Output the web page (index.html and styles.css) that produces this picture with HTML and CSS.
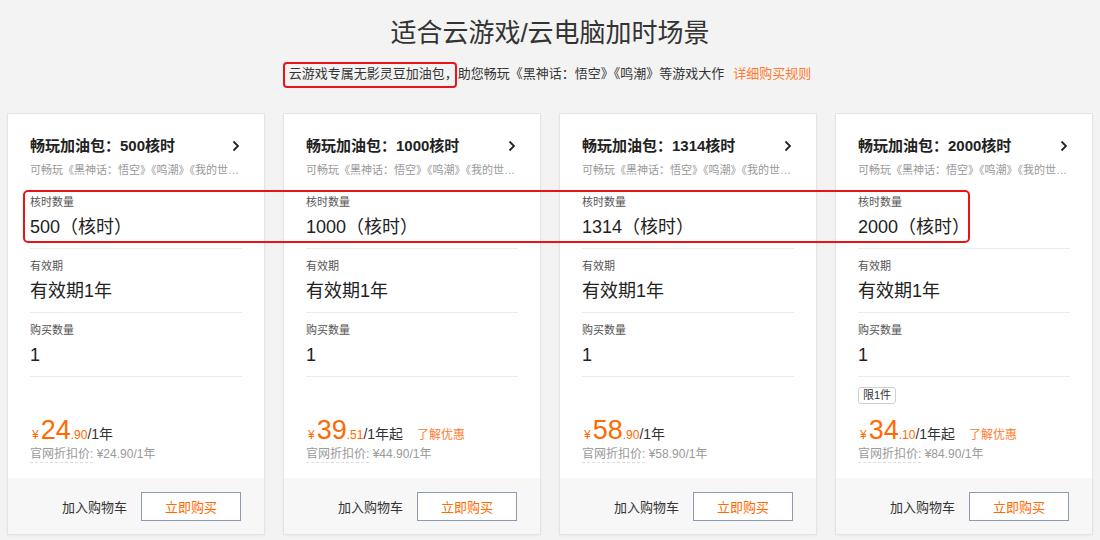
FILE: index.html
```html
<!DOCTYPE html>
<html lang="zh-CN">
<head>
<meta charset="utf-8">
<title>适合云游戏/云电脑加时场景</title>
<link rel="stylesheet" href="styles.css">
</head>
<body>
<div class="page">
  <header class="hero">
    <h1 class="hero-title">适合云游戏/云电脑加时场景</h1>
    <p class="hero-sub">云游戏专属无影灵豆加油包，助您畅玩《黑神话：悟空》《鸣潮》等游戏大作<a class="hero-link" href="#">详细购买规则</a></p>
  </header>

  <div class="cards">
    <section class="card">
      <div class="card-body">
        <div class="card-head">
          <div class="card-title-row"><h2 class="card-title">畅玩加油包：500核时</h2><svg class="chev" width="8" height="12" viewBox="0 0 8 12"><path d="M1.5 1.5 6 6l-4.5 4.5" fill="none" stroke="#222" stroke-width="1.8"/></svg></div>
          <p class="card-desc">可畅玩《黑神话：悟空》《鸣潮》《我的世…</p>
        </div>
        <div class="spec"><div class="spec-label">核时数量</div><div class="spec-value">500（核时）</div></div>
        <div class="spec"><div class="spec-label">有效期</div><div class="spec-value">有效期1年</div></div>
        <div class="spec"><div class="spec-label">购买数量</div><div class="spec-value">1</div></div>
        <div class="price-area">
          <div class="tag-row"></div>
          <div class="price-line"><span class="yen">¥</span><span class="int">24</span><span class="dec">.90</span><span class="unit">/1年</span></div>
          <div class="orig"><span class="orig-label">官网折扣价:</span> ¥24.90/1年</div>
        </div>
      </div>
      <div class="card-foot"><span class="cart">加入购物车</span><button class="buy">立即购买</button></div>
    </section>

    <section class="card">
      <div class="card-body">
        <div class="card-head">
          <div class="card-title-row"><h2 class="card-title">畅玩加油包：1000核时</h2><svg class="chev" width="8" height="12" viewBox="0 0 8 12"><path d="M1.5 1.5 6 6l-4.5 4.5" fill="none" stroke="#222" stroke-width="1.8"/></svg></div>
          <p class="card-desc">可畅玩《黑神话：悟空》《鸣潮》《我的世…</p>
        </div>
        <div class="spec"><div class="spec-label">核时数量</div><div class="spec-value">1000（核时）</div></div>
        <div class="spec"><div class="spec-label">有效期</div><div class="spec-value">有效期1年</div></div>
        <div class="spec"><div class="spec-label">购买数量</div><div class="spec-value">1</div></div>
        <div class="price-area">
          <div class="tag-row"></div>
          <div class="price-line"><span class="yen">¥</span><span class="int">39</span><span class="dec">.51</span><span class="unit">/1年起</span><a class="promo" href="#">了解优惠</a></div>
          <div class="orig"><span class="orig-label">官网折扣价:</span> ¥44.90/1年</div>
        </div>
      </div>
      <div class="card-foot"><span class="cart">加入购物车</span><button class="buy">立即购买</button></div>
    </section>

    <section class="card">
      <div class="card-body">
        <div class="card-head">
          <div class="card-title-row"><h2 class="card-title">畅玩加油包：1314核时</h2><svg class="chev" width="8" height="12" viewBox="0 0 8 12"><path d="M1.5 1.5 6 6l-4.5 4.5" fill="none" stroke="#222" stroke-width="1.8"/></svg></div>
          <p class="card-desc">可畅玩《黑神话：悟空》《鸣潮》《我的世…</p>
        </div>
        <div class="spec"><div class="spec-label">核时数量</div><div class="spec-value">1314（核时）</div></div>
        <div class="spec"><div class="spec-label">有效期</div><div class="spec-value">有效期1年</div></div>
        <div class="spec"><div class="spec-label">购买数量</div><div class="spec-value">1</div></div>
        <div class="price-area">
          <div class="tag-row"></div>
          <div class="price-line"><span class="yen">¥</span><span class="int">58</span><span class="dec">.90</span><span class="unit">/1年</span></div>
          <div class="orig"><span class="orig-label">官网折扣价:</span> ¥58.90/1年</div>
        </div>
      </div>
      <div class="card-foot"><span class="cart">加入购物车</span><button class="buy">立即购买</button></div>
    </section>

    <section class="card">
      <div class="card-body">
        <div class="card-head">
          <div class="card-title-row"><h2 class="card-title">畅玩加油包：2000核时</h2><svg class="chev" width="8" height="12" viewBox="0 0 8 12"><path d="M1.5 1.5 6 6l-4.5 4.5" fill="none" stroke="#222" stroke-width="1.8"/></svg></div>
          <p class="card-desc">可畅玩《黑神话：悟空》《鸣潮》《我的世…</p>
        </div>
        <div class="spec"><div class="spec-label">核时数量</div><div class="spec-value">2000（核时）</div></div>
        <div class="spec"><div class="spec-label">有效期</div><div class="spec-value">有效期1年</div></div>
        <div class="spec"><div class="spec-label">购买数量</div><div class="spec-value">1</div></div>
        <div class="price-area">
          <div class="tag-row"><span class="tag">限1件</span></div>
          <div class="price-line"><span class="yen">¥</span><span class="int">34</span><span class="dec">.10</span><span class="unit">/1年起</span><a class="promo" href="#">了解优惠</a></div>
          <div class="orig"><span class="orig-label">官网折扣价:</span> ¥84.90/1年</div>
        </div>
      </div>
      <div class="card-foot"><span class="cart">加入购物车</span><button class="buy">立即购买</button></div>
    </section>
  </div>

  <div class="mark mark-intro"></div>
  <div class="mark mark-core"></div>
</div>
</body>
</html>
```

FILE: styles.css
```css
* { box-sizing: border-box; }
html, body { margin: 0; padding: 0; }
body {
  background: #f3f3f3;
  font-family: "Liberation Sans", "Noto Sans CJK SC", sans-serif;
  color: #333;
  width: 1100px;
  height: 540px;
  overflow: hidden;
}
.page { position: relative; width: 1100px; height: 540px; }

.hero { text-align: center; padding-top: 16px; }
.hero-title {
  margin: 0;
  font-size: 26px;
  line-height: 34px;
  font-weight: 400;
  color: #333;
}
.hero-sub {
  margin: 14px 0 0;
  font-size: 13px;
  line-height: 20px;
  color: #333;
}
.hero-link { color: #ff7a2e; text-decoration: none; margin-left: 9px; }

.cards {
  display: grid;
  grid-template-columns: repeat(4, 256px);
  column-gap: 20px;
  padding: 0 8px;
  margin-top: 30px;
}
.card {
  height: 420px;
  background: #fff;
  box-shadow: 0 0 0 1px #e4e4e4, 0 1px 3px rgba(0,0,0,0.08);
  display: flex;
  flex-direction: column;
}
.card-body { flex: 1; padding: 20px 22px 0; }
.card-head { padding-bottom: 6px; }
.card-title-row {
  display: flex;
  align-items: center;
  justify-content: space-between;
  height: 24px;
}
.card-title {
  margin: 0;
  font-size: 15px;
  line-height: 24px;
  font-weight: 700;
  color: #222;
}
.chev { margin-right: 2px; }
.card-desc {
  margin: 3px 0 0;
  font-size: 11px;
  line-height: 18px;
  color: #999;
  white-space: nowrap;
  overflow: hidden;
}
.spec {
  padding: 8px 0 8px;
  border-bottom: 1px solid #ebebeb;
}
.spec-label { font-size: 11px; line-height: 18px; color: #555; }
.spec-value {
  margin-top: 3px;
  font-size: 18px;
  line-height: 26px;
  color: #222;
}

.price-area { padding-top: 10px; }
.tag-row { height: 17px; display: flex; }
.tag {
  display: inline-block;
  height: 17px;
  line-height: 15px;
  padding: 0 4px;
  border: 1px solid #cfcfcf;
  border-radius: 3px;
  font-size: 11px;
  color: #333;
  background: #fff;
}
.price-line {
  margin-top: 12px;
  height: 28px;
  display: flex;
  align-items: baseline;
  color: #ff6a00;
  padding-left: 2px;
}
.yen { font-size: 12px; margin-right: 2px; }
.int { font-size: 27px; line-height: 28px; }
.dec { font-size: 12px; }
.unit { font-size: 14px; color: #333; }
.promo { margin-left: 14px; font-size: 12px; color: #ff7a2e; text-decoration: none; }
.orig {
  margin-top: 2px;
  font-size: 12px;
  line-height: 16px;
  color: #999;
}
.orig-label { border-bottom: 1px dashed #ddd; padding-bottom: 1px; }

.card-foot {
  height: 56px;
  background: #f7f7f7;
  display: flex;
  align-items: center;
  justify-content: flex-end;
  padding-right: 23px;
}
.cart { font-size: 13px; color: #333; margin-right: 14px; }
.buy {
  width: 100px;
  height: 29px;
  border: 1px solid #8e9ab3;
  background: #fff;
  color: #ff6a00;
  font-family: inherit;
  font-size: 13px;
  padding: 0;
  cursor: pointer;
}

.mark {
  position: absolute;
  border: 2px solid #e8141c;
  pointer-events: none;
}
.mark-intro { left: 283px; top: 62px; width: 174px; height: 26px; border-radius: 4px; }
.mark-core { left: 23px; top: 190px; width: 947px; height: 53px; border-radius: 5px; }
```
